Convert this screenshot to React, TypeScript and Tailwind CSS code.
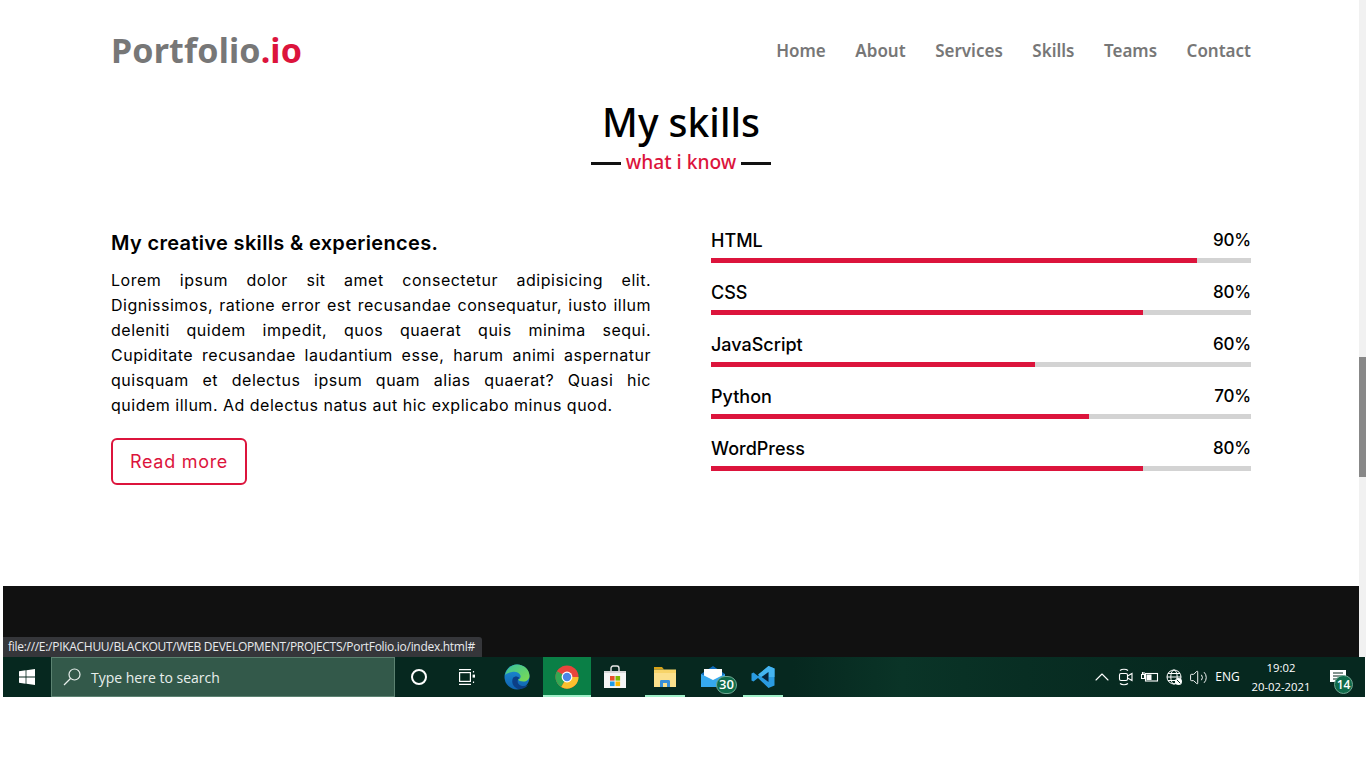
import React from 'react';
import { ChevronUp, Volume2 } from 'lucide-react';

const navLinks = ['Home', 'About', 'Services', 'Skills', 'Teams', 'Contact'];

const skills = [
  { name: 'HTML', value: 90 },
  { name: 'CSS', value: 80 },
  { name: 'JavaScript', value: 60 },
  { name: 'Python', value: 70 },
  { name: 'WordPress', value: 80 },
];

const paragraph = [
  'Lorem ipsum dolor sit amet consectetur adipisicing elit.',
  'Dignissimos, ratione error est recusandae consequatur, iusto illum',
  'deleniti quidem impedit, quos quaerat quis minima sequi.',
  'Cupiditate recusandae laudantium esse, harum animi aspernatur',
  'quisquam et delectus ipsum quam alias quaerat? Quasi hic',
];

const WindowsIcon = () => (
  <svg width="16" height="16" viewBox="0 0 16 16" fill="#fff">
    <path d="M0 2.3 6.6 1.3V7.6H0zM7.4 1.2 16 0V7.6H7.4zM0 8.4H6.6V14.7L0 13.7zM7.4 8.4H16V16L7.4 14.8z" />
  </svg>
);

const SearchIcon = () => (
  <svg width="18" height="18" viewBox="0 0 18 18" fill="none" stroke="#e8efec" strokeWidth="1.2">
    <circle cx="11.500" cy="6.500" r="5.500" />
    <path d="M7.500 10.500 1 17" />
  </svg>
);

const TaskViewIcon = () => (
  <svg width="18" height="16" viewBox="0 0 18 16" fill="none" stroke="#fff" strokeWidth="1.2">
    <path d="M1 0.6H13M1 15.4H13" />
    <rect x="1.6" y="3.6" width="10.8" height="8.8" />
    <path d="M15.5 2V3.5M15.5 12.5V14" />
    <rect x="14.6" y="5.6" width="2.4" height="3" fill="#fff" stroke="none" />
  </svg>
);

const EdgeIcon = () => (
  <svg width="26" height="26" viewBox="0 0 26 26">
    <defs>
      <linearGradient id="edgeA" x1="0" y1="0" x2="1" y2="1">
        <stop offset="0" stopColor="#35c1a0" />
        <stop offset="1" stopColor="#7fdc4e" />
      </linearGradient>
      <linearGradient id="edgeB" x1="0" y1="0" x2="0" y2="1">
        <stop offset="0" stopColor="#1e90d8" />
        <stop offset="1" stopColor="#0f62ae" />
      </linearGradient>
    </defs>
    <circle cx="13" cy="13" r="12.5" fill="url(#edgeB)" />
    <path d="M1 11C3 4 8 .5 13 .5c7 0 12.5 5 12.5 11.5 0 3.5-3 5.5-6 5.5-3 0-5-1-5.5-2 2-.5 3-2 2.500-4-1-3-5-4.500-8.500-3.500C5 8.500 2.500 9.500 1 11z" fill="url(#edgeA)" />
    <path d="M9 14c-2 4 0 9 5 11 4 .5 8-1 10-4-4 2-8 1-9.500-1-1.500-2-1-5 1-6-2-2-5-2-6.500 0z" fill="#0c3f86" />
  </svg>
);

const ChromeIcon = () => (
  <svg width="24" height="24" viewBox="0 0 24 24">
    <circle cx="12" cy="12" r="11.500" fill="#e8453c" />
    <path d="M12 12 6.250 22A11.500 11.500 0 0 1 2.040 6.250z" fill="#34a853" />
    <path d="M12 12H23.500A11.500 11.500 0 0 1 6.250 22z" fill="#fbc02d" />
    <circle cx="12" cy="12" r="5.400" fill="#fff" />
    <circle cx="12" cy="12" r="4.200" fill="#4a86e8" />
  </svg>
);

const StoreIcon = () => (
  <svg width="24" height="24" viewBox="0 0 24 24">
    <path d="M8 6V3.500C8 2 9 1 10 1H14C15 1 16 2 16 3.500V6" fill="none" stroke="#e8e8e8" strokeWidth="1.400" />
    <path d="M1 6H23V23H1z" fill="#f5f5f5" />
    <path d="M1 6H23V8H1z" fill="#d8d8d8" />
    <rect x="7" y="11" width="4.600" height="4.600" fill="#e8502a" />
    <rect x="12.500" y="11" width="4.600" height="4.600" fill="#7fba00" />
    <rect x="7" y="16.500" width="4.600" height="4.600" fill="#1e9be8" />
    <rect x="12.500" y="16.500" width="4.600" height="4.600" fill="#fbb800" />
  </svg>
);

const FolderIcon = () => (
  <svg width="24" height="22" viewBox="0 0 24 22">
    <path d="M1 1H9L11 3.500H1z" fill="#d8a317" />
    <path d="M1 3.500H23V21H1z" fill="#f7d469" />
    <path d="M1 7H23V21H1z" fill="#fbe08c" />
    <path d="M7 21V15.500C7 14.500 7.500 14 8.500 14H15.500C16.500 14 17 14.500 17 15.500V21H14V17H10V21z" fill="#3a8fd8" />
  </svg>
);

const MailIcon = () => (
  <svg width="24" height="22" viewBox="0 0 24 22">
    <path d="M0 8 12 0 24 8V21H0z" fill="#0f6cbd" />
    <path d="M3 3H21V12L12 16 3 12z" fill="#fff" />
    <path d="M0 8 12 14 24 8V21H0z" fill="#36a9ee" />
  </svg>
);

const VsCodeIcon = () => (
  <svg width="24" height="24" viewBox="0 0 24 24">
    <path d="M17.500 1 23.500 3.500V20.500L17.500 23 7 13 2.500 16.500 .5 15.500V8.500L2.500 7.500 7 11z" fill="#2a9be0" />
    <path d="M17.500 1 23.500 3.500V12H17.500V7L10.500 12 7 9.500z" fill="#44b4f0" />
    <path d="M17.500 7V17L10.500 12z" fill="#06243a" />
  </svg>
);

const MeetIcon = () => (
  <svg width="16" height="18" viewBox="0 0 16 18" fill="none" stroke="#fff" strokeWidth="1.100">
    <path d="M2 2.500C4 .8 8 .8 10 2.500M2 15.500C4 17.200 8 17.200 10 15.500" />
    <rect x="1.500" y="5.500" width="8" height="7" rx="1.500" />
    <path d="M9.500 8 14 5.500V12.500L9.500 10" />
  </svg>
);

const BatteryIcon = () => (
  <svg width="18" height="12" viewBox="0 0 18 12" fill="none" stroke="#fff" strokeWidth="1.100">
    <rect x="4.500" y="2.500" width="12" height="7.500" />
    <rect x="5.500" y="3.500" width="5" height="5.500" fill="#fff" stroke="none" />
    <path d="M0.500 3.500H3.500V7.500H0.500zM1.500 1V3.500M3 1V3.500" />
  </svg>
);

const GlobeIcon = () => (
  <svg width="17" height="17" viewBox="0 0 17 17" fill="none" stroke="#fff" strokeWidth="1">
    <circle cx="8" cy="8" r="7" />
    <ellipse cx="8" cy="8" rx="3.200" ry="7" />
    <path d="M1 8H15M2 4.500H14M2 11.500H14" />
    <circle cx="12.500" cy="12.500" r="3.500" fill="#fff" stroke="none" />
    <path d="M10.800 10.800 14.200 14.200" stroke="#0a2b22" />
  </svg>
);

const Badge = ({ children, size }: { children: React.ReactNode; size: string }) => (
  <span className={`absolute flex items-center justify-center rounded-full border border-[#6fa893] bg-[#0f6b4a] text-white font-semibold ${size}`}>
    {children}
  </span>
);

const Slot = ({ children, className = '' }: { children: React.ReactNode; className?: string }) => (
  <div className={`relative flex h-full w-12 items-center justify-center ${className}`}>{children}</div>
);

const App = () => {
  return (
    <div className="relative h-[768px] w-[1366px] overflow-hidden bg-white font-['Open_Sans',sans-serif]">
      <div className="flex h-[657px]">
        <div className="flex w-[1359px] flex-col">
          {/* Navbar */}
          <nav className="flex h-[91px] shrink-0 items-center justify-between pl-[111px] pr-[108px] pt-[10px] font-['Noto_Sans',sans-serif]">
            <a className="pb-[2px] text-[34px] font-bold leading-none tracking-[0.15px] text-[#777]">
              Portfolio<span className="text-[#dc143c]">.io</span>
            </a>
            <ul className="flex gap-[29.5px] text-[17px] font-semibold text-[#777]">
              {navLinks.map((link) => (
                <li key={link}>{link}</li>
              ))}
            </ul>
          </nav>

          {/* Title */}
          <div className="flex h-[79px] shrink-0 flex-col items-center pl-[3px] font-['Noto_Sans',sans-serif]">
            <h2 className="mt-[5px] text-[39px] font-medium leading-[52px] text-black">My skills</h2>
            <div className="mt-[2px] flex items-center gap-[5px] leading-[24px]">
              <span className="h-[3px] w-[30px] bg-[#111]" />
              <span className="pb-[2px] text-[19.2px] font-medium text-[#dc143c]">what i know</span>
              <span className="h-[3px] w-[30px] bg-[#111]" />
            </div>
          </div>

          {/* Skills section */}
          <section className="flex flex-1 gap-[60px] pl-[111px] pr-[108px] pt-[52px] font-['Inter',sans-serif] text-black">
            <div className="w-[540px] pt-[6px]">
              <h3 className="text-[20px] font-semibold leading-[30px] tracking-[0.33px]">My creative skills &amp; experiences.</h3>
              <div className="mt-[10px] text-[16px] leading-[25px] tracking-[0.5px]">
                {paragraph.map((line) => (
                  <p key={line} className="[text-align-last:justify]">{line}</p>
                ))}
                <p>quidem illum. Ad delectus natus aut hic explicabo minus quod.</p>
              </div>
              <a className="mt-[20px] flex h-[47px] w-[136px] items-center justify-center rounded-md border-2 border-[#dc143c] text-[18px] tracking-[0.7px] text-[#dc143c]">
                Read more
              </a>
            </div>
            <div className="flex w-[540px] flex-col gap-[12px] pt-[1px]">
              {skills.map((skill) => (
                <div key={skill.name}>
                  <div className="flex h-[35px] items-center justify-between text-[18px] font-medium leading-none">
                    <span>{skill.name}</span>
                    <span className="text-[17px] tracking-[-0.2px]">{skill.value}%</span>
                  </div>
                  <div className="h-[5px] bg-[#d3d3d3]">
                    <div className="h-full bg-[#dc143c]" style={{ width: `${skill.value}%` }} />
                  </div>
                </div>
              ))}
            </div>
          </section>

          {/* Footer */}
          <footer className="ml-[3px] h-[71px] shrink-0 bg-[#111]" />
        </div>

        {/* Scrollbar */}
        <div className="w-[7px] bg-[#f1f1f1] pt-[357px]">
          <div className="h-[120px] bg-[#888]" />
        </div>
      </div>

      {/* Link status bubble */}
      <div className="absolute left-[3px] top-[637px] flex h-[20px] w-[479px] items-center rounded-tr-[3px] bg-[#35363a] pl-[5px] text-[12px] tracking-[-0.29px] text-[#e8eaed]">
        file:///E:/PIKACHUU/BLACKOUT/WEB DEVELOPMENT/PROJECTS/PortFolio.io/index.html#
      </div>

      {/* Windows taskbar */}
      <div className="ml-[3px] flex h-[40px] w-[1362px] items-center bg-[linear-gradient(90deg,#06281f_0%,#06281f_58%,#0a3427_66%,#082e23_75%,#06281f_88%)] text-white">
        <Slot><WindowsIcon /></Slot>
        <div className="flex h-full w-[344px] items-center border border-[#5c8271] bg-[#33594a] pl-[11px] text-[14px] text-[#e8efec]">
          <SearchIcon />
          <span className="ml-[10px]">Type here to search</span>
        </div>
        <Slot><span className="h-[16px] w-[16px] rounded-full border-2 border-white" /></Slot>
        <Slot><TaskViewIcon /></Slot>
        <Slot className="ml-[2px]"><EdgeIcon /></Slot>
        <Slot className="ml-[2px] bg-[#0a7f46]">
          <ChromeIcon />
          <span className="absolute bottom-0 left-0 h-[2px] w-full bg-[#9ff0c8]" />
        </Slot>
        <Slot><StoreIcon /></Slot>
        <Slot className="ml-[2px]">
          <FolderIcon />
          <span className="absolute bottom-0 left-[4px] h-[2px] w-[40px] bg-[#9ff0c8]" />
        </Slot>
        <Slot>
          <MailIcon />
          <Badge size="left-[27px] top-[19px] h-[18px] w-[21px] text-[13px]">30</Badge>
        </Slot>
        <Slot className="ml-[2px]">
          <VsCodeIcon />
          <span className="absolute bottom-0 left-[4px] h-[2px] w-[40px] bg-[#9ff0c8]" />
        </Slot>

        <div className="ml-auto flex h-full items-center pr-[6px]">
          <div className="flex w-[24px] justify-center"><ChevronUp size={26} strokeWidth={1.100} /></div>
          <div className="flex w-[24px] justify-center"><MeetIcon /></div>
          <div className="flex w-[24px] justify-center"><BatteryIcon /></div>
          <div className="flex w-[24px] justify-center"><GlobeIcon /></div>
          <div className="flex w-[24px] justify-center"><Volume2 size={19} strokeWidth={1.200} /></div>
          <div className="w-[35px] text-center text-[12px]">ENG</div>
          <div className="w-[72px] text-center text-[11.300px] leading-[19px]">
            <div>19:02</div>
            <div>20-02-2021</div>
          </div>
          <div className="relative flex h-full w-[42px] items-center justify-center">
            <svg width="16" height="14" viewBox="0 0 16 14">
              <path d="M0 0H16V12H9L7 14V12H0z" fill="#fff" />
              <path d="M3 3H13M3 6H13M3 9H10" stroke="#06281f" strokeWidth="1" />
            </svg>
            <Badge size="left-[17px] top-[18px] h-[19px] w-[19px] text-[12px]">14</Badge>
          </div>
        </div>
      </div>
    </div>
  );
};

export default App;
